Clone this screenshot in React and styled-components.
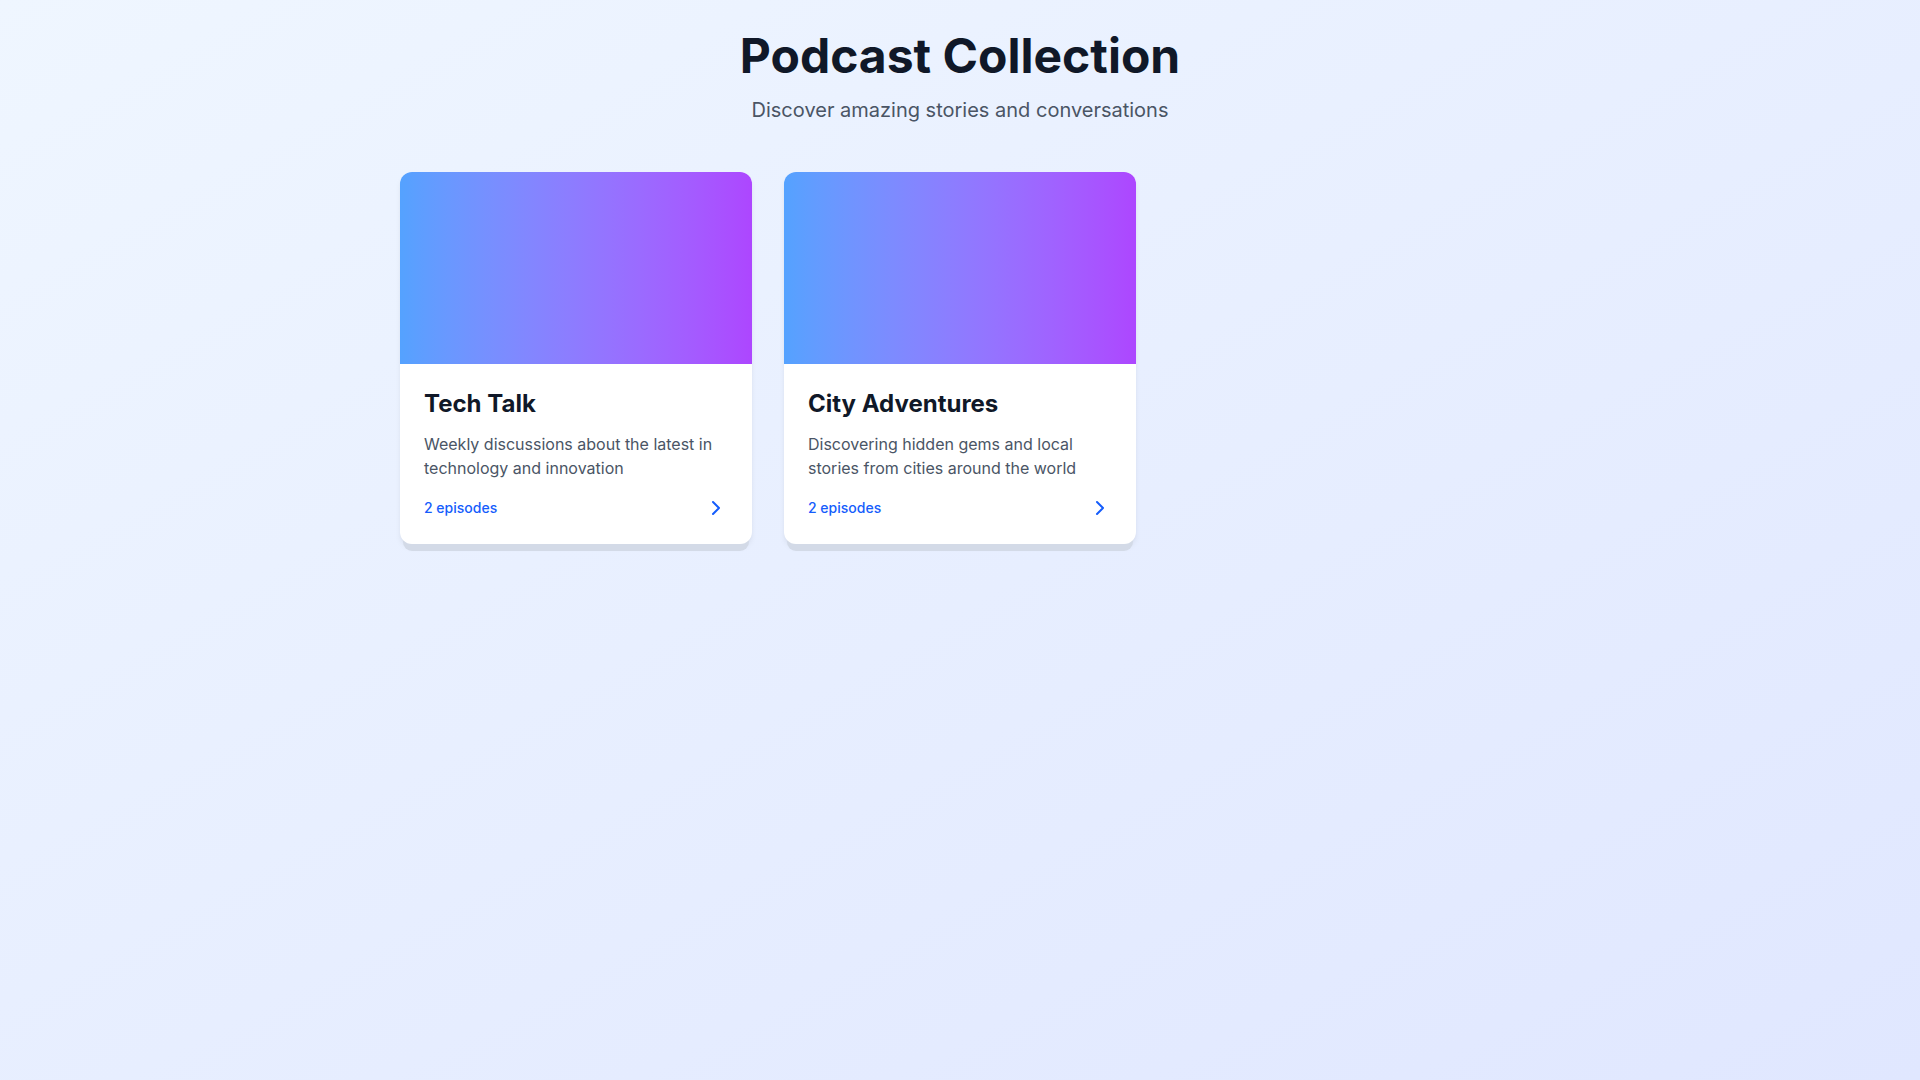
import styled, { createGlobalStyle } from "styled-components";
import { ChevronRight } from "lucide-react";

const GlobalStyle = createGlobalStyle`
  * {
    box-sizing: border-box;
  }
  html, body {
    margin: 0;
    padding: 0;
  }
  body {
    font-family: Inter, "Noto Sans", sans-serif;
    background: linear-gradient(in oklab to bottom right, #eff6ff, #e0e7ff);
    min-height: 100vh;
  }
`;

const podcasts = [
  {
    id: 1,
    title: "Tech Talk",
    description: "Weekly discussions about the latest in technology and innovation",
    episodes: 2,
  },
  {
    id: 2,
    title: "City Adventures",
    description: "Discovering hidden gems and local stories from cities around the world",
    episodes: 2,
  },
];

const App = () => {
  return (
    <>
      <GlobalStyle />
      <Page>
        <Header>
          <Title>Podcast Collection</Title>
          <Subtitle>Discover amazing stories and conversations</Subtitle>
        </Header>
        <Grid>
          {podcasts.map((p) => (
            <Card key={p.id}>
              <Cover />
              <Body>
                <CardTitle>{p.title}</CardTitle>
                <Description>{p.description}</Description>
                <Footer>
                  <Episodes>{p.episodes} episodes</Episodes>
                  <ChevronRight size={24} color="#155dfc" strokeWidth={2} />
                </Footer>
              </Body>
            </Card>
          ))}
        </Grid>
      </Page>
    </>
  );
};

export default App;

const Page = styled.div`
  min-height: 100vh;
  padding: 32px 16px;
`;

const Header = styled.header`
  text-align: center;
  margin-bottom: 48px;
`;

const Title = styled.h1`
  margin: 0 0 16px;
  font-size: 48px;
  line-height: 1;
  font-weight: 700;
  color: #101828;
`;

const Subtitle = styled.p`
  margin: 0;
  font-size: 20px;
  line-height: 28px;
  color: #4a5565;
`;

const Grid = styled.div`
  max-width: 1120px;
  margin: 0 auto;
  display: grid;
  grid-template-columns: repeat(3, 1fr);
  gap: 32px;
  align-items: start;
`;

const Card = styled.div`
  background: #fff;
  border-radius: 12px;
  box-shadow: 0 10px 0 -3px #d3dae7, 0 4px 6px -1px rgba(0, 0, 0, 0.08),
    0 2px 4px -2px rgba(0, 0, 0, 0.06);
`;

const Cover = styled.div`
  height: 192px;
  border-radius: 12px 12px 0 0;
  background: linear-gradient(in oklab to right, #54a2ff, #ad46ff);
`;

const Body = styled.div`
  padding: 24px;
`;

const CardTitle = styled.h2`
  margin: 0 0 12px;
  font-size: 24px;
  line-height: 32px;
  font-weight: 700;
  color: #101828;
`;

const Description = styled.p`
  margin: 0 0 16px;
  font-size: 16px;
  line-height: 24px;
  color: #4a5565;
`;

const Footer = styled.div`
  display: flex;
  align-items: center;
  justify-content: space-between;
`;

const Episodes = styled.span`
  font-size: 14px;
  line-height: 20px;
  font-weight: 500;
  color: #155dfc;
`;
